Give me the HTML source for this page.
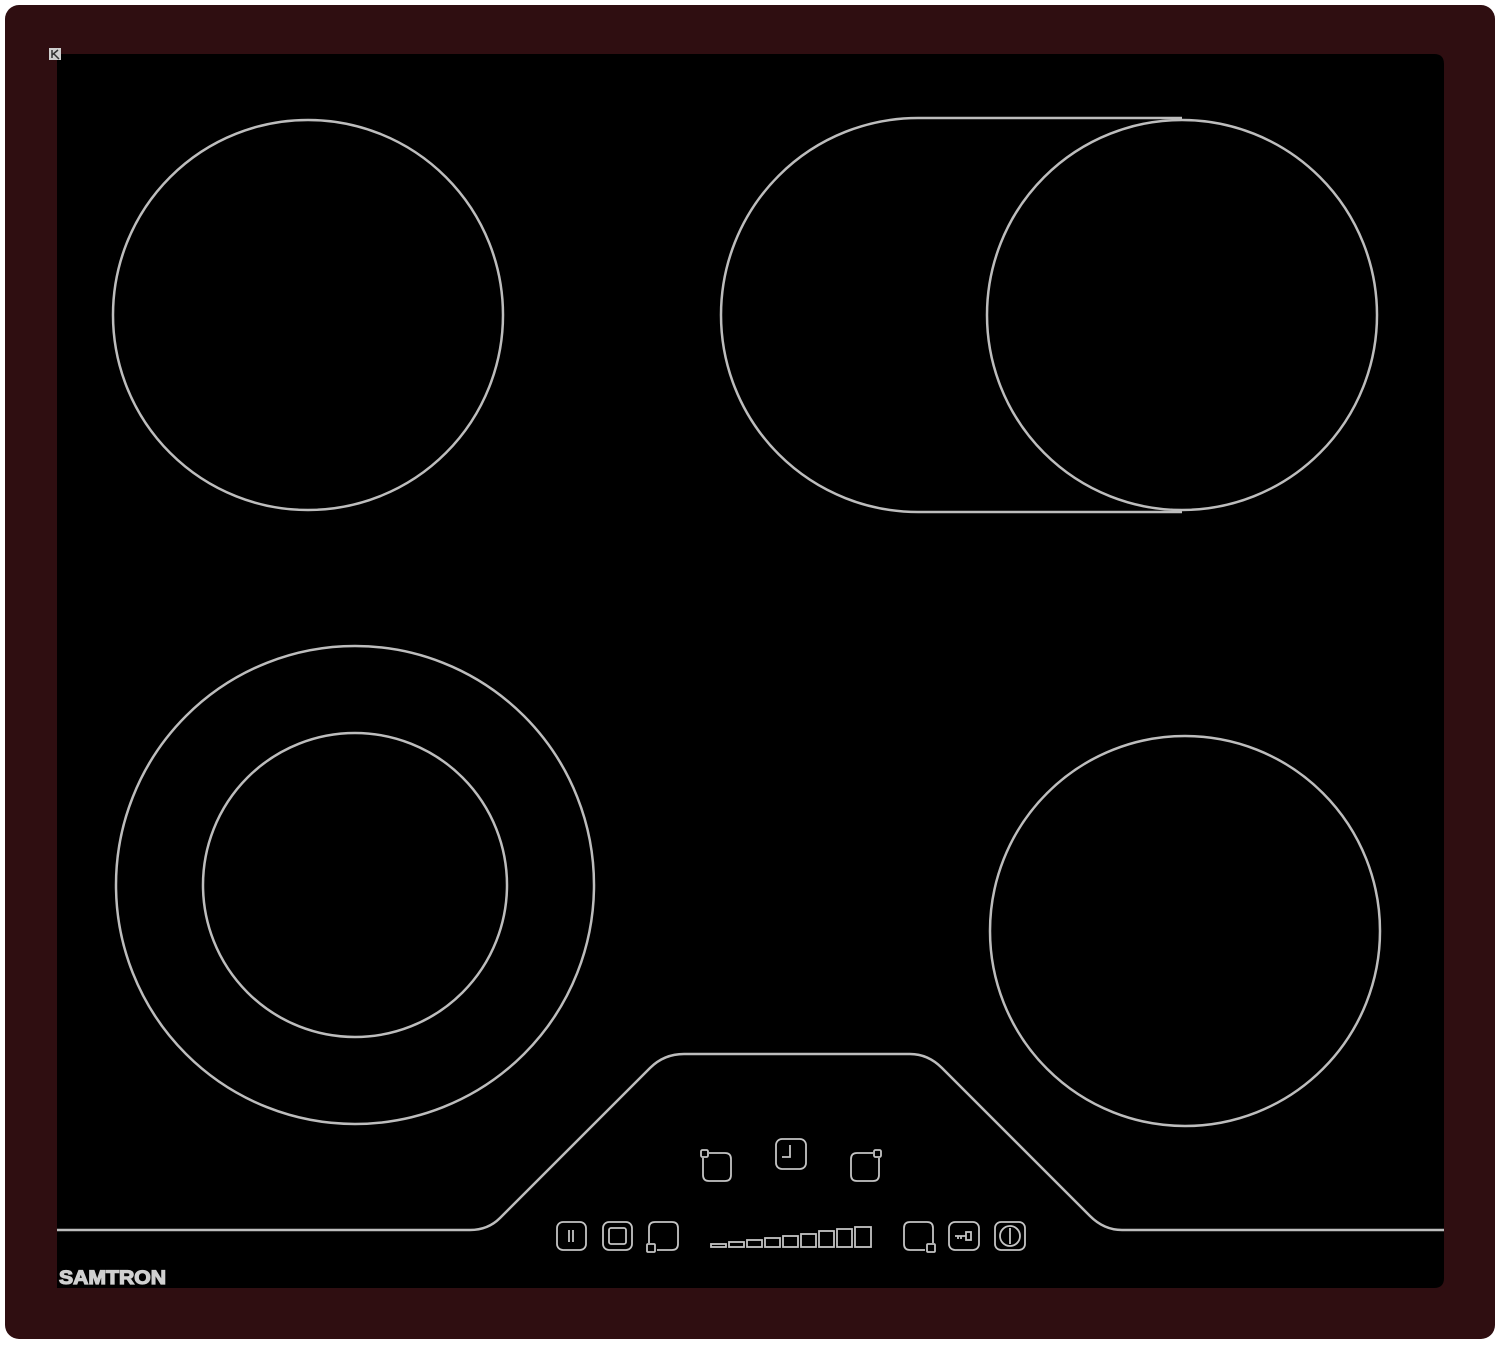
<!DOCTYPE html>
<html><head><meta charset="utf-8"><style>
html,body{margin:0;padding:0;background:#fff;}
body{width:1500px;height:1346px;position:relative;overflow:hidden;}
</style></head><body>
<svg width="1500" height="1346" viewBox="0 0 1500 1346" style="position:absolute;left:0;top:0">
<rect x="5" y="5" width="1490" height="1334" rx="14" fill="#2f0e11"/>
<path d="M57 54 H1434 Q1444 54 1444 64 V1278 Q1444 1288 1434 1288 H57 Z" fill="#000"/>
<rect x="49" y="48" width="12" height="12" fill="#cfcfcf"/>
<path d="M52 50 V58 M52 55 L58 50 M54 54 L59 59" stroke="#333" stroke-width="1.5" fill="none"/>
<g fill="none" stroke="#bdbdbd" stroke-width="2.5">
<circle cx="308" cy="315" r="195"/>
<path d="M1182 118 H918 A197 197 0 0 0 918 512 H1182"/>
<circle cx="1182" cy="315" r="195"/>
<circle cx="355" cy="885" r="239"/>
<circle cx="355" cy="885" r="152"/>
<circle cx="1185" cy="931" r="195"/>
<path d="M57 1230 H470 Q488 1230 500 1218 L650 1068 Q664 1054 684 1054 H910 Q928 1054 942 1068 L1090 1216 Q1104 1230 1122 1230 H1444"/>
</g>
<g fill="none" stroke="#c4c4c4" stroke-width="1.8">
<path d="M709 1153 H725 Q731 1153 731 1159 V1175 Q731 1181 725 1181 H709 Q703 1181 703 1175 V1158"/>
<rect x="701" y="1150" width="7" height="7" rx="1.5"/>
<rect x="776" y="1139" width="30" height="30" rx="6"/>
<path d="M790 1145 V1157 H782"/>
<path d="M873 1153 H857 Q851 1153 851 1159 V1175 Q851 1181 857 1181 H873 Q879 1181 879 1175 V1158"/>
<rect x="874" y="1150" width="7" height="7" rx="1.5"/>
<rect x="557" y="1222" width="29" height="28" rx="6"/>
<path d="M569 1230 V1242 M573 1230 V1242"/>
<rect x="603" y="1222" width="29" height="28" rx="6"/>
<rect x="609" y="1228" width="17" height="16" rx="2"/>
<path d="M649 1243 V1228 Q649 1222 655 1222 H672 Q678 1222 678 1228 V1244 Q678 1250 672 1250 H657"/>
<rect x="647" y="1244" width="8" height="8" rx="1"/>
<rect x="711" y="1244" width="15" height="3"/>
<rect x="729" y="1242" width="15" height="5"/>
<rect x="747" y="1240" width="15" height="7"/>
<rect x="765" y="1238" width="15" height="9"/>
<rect x="783" y="1236" width="15" height="11"/>
<rect x="801" y="1234" width="15" height="13"/>
<rect x="819" y="1231" width="15" height="16"/>
<rect x="837" y="1229" width="15" height="18"/>
<rect x="855" y="1227" width="16" height="20"/>
<path d="M933 1243 V1228 Q933 1222 927 1222 H910 Q904 1222 904 1228 V1244 Q904 1250 910 1250 H925"/>
<rect x="927" y="1244" width="8" height="8" rx="1"/>
<rect x="949" y="1222" width="30" height="28" rx="6"/>
<path d="M955 1236 H966 M958 1236 V1239 M961 1236 V1239"/>
<rect x="966" y="1232" width="5" height="8"/>
<rect x="995" y="1222" width="30" height="28" rx="6"/>
<circle cx="1010" cy="1236" r="10"/>
<path d="M1010 1228 V1244"/>
</g>
<text x="59" y="1284" textLength="107" lengthAdjust="spacingAndGlyphs" font-family="Liberation Sans, sans-serif" font-weight="bold" font-size="19" fill="#d0d0d0" stroke="#d0d0d0" stroke-width="1.2">SAMTRON</text>
</svg>
</body></html>
